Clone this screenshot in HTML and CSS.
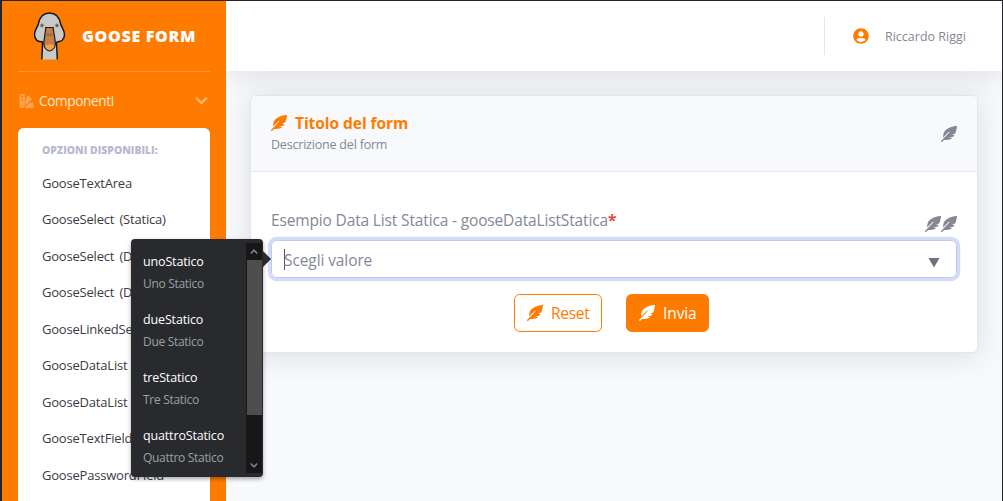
FILE: index.html
```html
<!DOCTYPE html>
<html lang="it">
<head>
<meta charset="utf-8">
<title>Goose Form</title>
<link rel="stylesheet" href="styles.css">
</head>
<body>
<svg class="defs" aria-hidden="true">
  <symbol id="feather" viewBox="0 0 512 512"><path d="M512 0C460.22 3.56 96.44 38.2 71.01 287.61c-3.09 26.66-4.84 53.44-5.99 80.24l178.87-178.69c6.25-6.25 16.4-6.25 22.65 0s6.25 16.38 0 22.63L7.04 471.03c-9.38 9.37-9.38 24.57 0 33.94 9.38 9.37 24.59 9.37 33.98 0l57.13-57.07c42.09-.14 84.15-2.53 125.96-7.36 53.48-5.44 97.02-26.47 132.58-56.54H255.74l146.79-48.88c11.25-14.89 21.37-30.71 30.45-47.12h-81.14l106.54-53.21C500.29 132.86 510.19 26.26 512 0z"/></symbol>
</svg>
<div class="app">
  <aside class="sidebar">
    <div class="brand">
      <svg class="goose" viewBox="0 0 34 48">
        <path d="M9 25 8.3 47.5H25L24.5 25Z" fill="#c9c9c9"/>
        <path d="M9.6 29 8.8 47.5M23.5 29 24.300 47.5" fill="none" stroke="#151515" stroke-width="1.5"/>
        <path d="M16.5 1C10 1 6.5 6 5.300 12 4.200 16 1.500 18 1.500 22.500 1.500 27 4.500 30 8.500 30H24.500C28.500 30 31.500 27 31.500 22.500 31.500 18 28.800 16 27.700 12 26.500 6 23 1 16.500 1Z" fill="#c9c9c9"/>
        <path d="M10 30C4.500 30 1.500 27 1.500 22.500 1.500 18 4.200 16 5.300 12 6.500 6 10 1 16.500 1 23 1 26.500 6 27.700 12 28.800 16 31.500 18 31.500 22.500 31.500 27 28.500 30 23.500 30" fill="none" stroke="#151515" stroke-width="1.500"/>
        <path d="M12.800 15.500H20.200C20.700 22 22.400 27 22.400 32 22.400 35.500 18.500 39 16.500 39 14.500 39 10.800 35.500 10.800 32 10.800 27 12.300 22 12.800 15.500Z" fill="#c27e4c" stroke="#241a13" stroke-width="1.200"/>
        <path d="M11.800 34C15 31.500 18.500 31.500 21.700 34 20 37 18 38.300 16.500 38.300 15 38.300 13 37 11.800 34Z" fill="#f2a343"/>
        <path d="M15 21.500v2.500M18 21.500v2.500" stroke="#704426" stroke-width="1"/>
        <circle cx="9" cy="13.500" r="1.700" fill="#555442" stroke="#a7a382"/><circle cx="24" cy="13.500" r="1.700" fill="#555442" stroke="#a7a382"/>
      </svg>
      <span class="brand-name">GOOSE FORM</span>
    </div>
    <hr class="divider">
    <div class="nav-toggle">
      <svg class="swatch" viewBox="0 0 512 512"><path d="M434.66,167.71h0L344.5,77.36a31.83,31.83,0,0,0-45-.07h0l-.07.07L224,152.88V424L434.66,212.9A32,32,0,0,0,434.66,167.71ZM480,320H373.09L186.68,506.51c-2.06,2.07-4.5,3.58-6.68,5.49H480a32,32,0,0,0,32-32V352A32,32,0,0,0,480,320ZM192,32A32,32,0,0,0,160,0H32A32,32,0,0,0,0,32V416a96,96,0,0,0,192,0ZM96,440a24,24,0,1,1,24-24A24,24,0,0,1,96,440Zm32-184H64V192h64Zm0-128H64V64h64Z"/></svg>
      <span class="nav-label">Componenti</span>
      <svg class="chevron" viewBox="0 0 12 8"><path d="M1.200 1.300 6 6.100 10.800 1.300"/></svg>
    </div>
    <nav class="submenu">
      <h6 class="submenu-title">OPZIONI DISPONIBILI:</h6>
      <a class="item">GooseTextArea</a>
      <a class="item">GooseSelect (Statica)</a>
      <a class="item">GooseSelect (D</a>
      <a class="item">GooseSelect (D</a>
      <a class="item">GooseLinkedSelect</a>
      <a class="item">GooseDataList</a>
      <a class="item">GooseDataList</a>
      <a class="item">GooseTextField</a>
      <a class="item">GoosePasswordField</a>
    </nav>
  </aside>
  <div class="content">
    <header class="topbar">
      <div class="topbar-divider"></div>
      <svg class="user-icon" viewBox="0 0 496 512"><path d="M248 8C111 8 0 119 0 256s111 248 248 248 248-111 248-248S385 8 248 8zm0 96c48.600 0 88 39.400 88 88s-39.400 88-88 88-88-39.400-88-88 39.400-88 88-88zm0 344c-58.700 0-111.300-26.600-146.500-68.200 18.800-35.400 55.600-59.800 98.500-59.800 2.400 0 4.800.4 7.100 1.100 13 4.200 26.600 6.900 40.900 6.900 14.300 0 28-2.700 40.900-6.900 2.300-.7 4.700-1.100 7.100-1.100 42.900 0 79.700 24.400 98.500 59.800C359.300 421.400 306.700 448 248 448z"/></svg>
      <span class="user-name">Riccardo Riggi</span>
    </header>
    <main class="card">
      <div class="card-header">
        <div class="heading">
          <div class="title"><svg class="feather"><use href="#feather"/></svg><span class="title-text">Titolo del form</span></div>
          <div class="subtitle">Descrizione del form</div>
        </div>
        <svg class="feather"><use href="#feather"/></svg>
      </div>
      <div class="card-body">
        <div class="label-row">
          <label class="label">Esempio Data List Statica - gooseDataListStatica<span class="required">*</span></label>
          <div class="label-icons"><svg class="feather"><use href="#feather"/></svg><svg class="feather"><use href="#feather"/></svg></div>
        </div>
        <div class="input">
          <span class="caret"></span><span class="placeholder">Scegli valore</span>
          <svg class="arrow-down" viewBox="0 0 12 10"><path d="M.500 0H11.500L6 9.500Z"/></svg>
        </div>
        <div class="buttons">
          <div class="btn btn-outline"><svg class="feather"><use href="#feather"/></svg><span class="reset-text">Reset</span></div>
          <div class="btn btn-solid"><svg class="feather"><use href="#feather"/></svg><span class="send-text">Invia</span></div>
        </div>
      </div>
    </main>
  </div>
</div>
<div class="popup">
  <div class="options">
    <div class="option"><div class="value">unoStatico</div><div class="desc">Uno Statico</div></div>
    <div class="option"><div class="value">dueStatico</div><div class="desc">Due Statico</div></div>
    <div class="option"><div class="value">treStatico</div><div class="desc">Tre Statico</div></div>
    <div class="option"><div class="value">quattroStatico</div><div class="desc">Quattro Statico</div></div>
  </div>
  <div class="scrollbar">
    <svg class="scroll-arrow" viewBox="0 0 8 7"><path d="M.8 5.500 4 2.200 7.200 5.500"/></svg>
    <div class="thumb"></div>
    <svg class="scroll-arrow" viewBox="0 0 8 7"><path d="M.8 1.500 4 4.800 7.200 1.500"/></svg>
  </div>
</div>
</body>
</html>
```
FILE: styles.css
```css
* { box-sizing: border-box; }
body { margin: 0; font-family: "Open Sans", "Noto Sans", sans-serif; color: #858796; white-space: nowrap; overflow: hidden; }
svg { display: block; flex: none; fill: currentColor; }
.defs { position: absolute; width: 0; height: 0; }
.app { display: flex; width: 1003px; height: 501px; overflow: hidden; border: solid #24252b; border-width: 1px 1px 0 2px; background: #f8f9fc; }

.sidebar { width: 224px; flex: none; padding: 0 16px; background: #ff7b00; }
.brand { display: flex; align-items: center; height: 70px; padding-left: 15px; }
.goose { width: 34px; height: 48px; }
.brand-name { margin-left: 15px; color: #fff; font-size: 16px; font-weight: 800; line-height: 24px; letter-spacing: .7px; }
.divider { height: 1px; margin: 0; border: 0; background: #ff9534; }
.nav-toggle { display: flex; align-items: center; height: 56px; padding: 1px 2px 0 1px; color: #ffe5cc; }
.swatch { width: 15px; height: 14px; color: #ffa452; }
.nav-label { margin-left: 5px; font-size: 13.600px; letter-spacing: -.35px; }
.chevron { width: 13px; height: 8px; margin-left: auto; }
.chevron path { fill: none; stroke: #ffb573; stroke-width: 2.200; stroke-linecap: round; stroke-linejoin: round; }
.submenu { height: 400px; padding: 8px 0; border-radius: 5.600px; background: #fff; }
.submenu-title { margin: 0; padding: 8px 24px; color: #b7b9cc; font-size: 10.400px; line-height: 13px; font-weight: 800; letter-spacing: 0; }
.item { display: block; height: 36.450px; padding-left: 24px; color: #3a3b45; font-size: 13px; line-height: 37.500px; letter-spacing: -.2px; word-spacing: 2px; }

.content { flex: 1; }
.topbar { display: flex; align-items: center; justify-content: flex-end; height: 70px; padding-right: 36px; background: #fff; box-shadow: 0 2.400px 28px 0 rgba(58,59,69,.15); clip-path: inset(0 0 -60px 0); }
.topbar-divider { width: 1px; height: 38px; background: #e3e6f0; }
.user-icon { width: 16px; height: 16px; margin: 0 16px 0 28px; color: #ff7b00; }
.user-name { width: 81px; font-size: 12.500px; }
.card { width: 728px; height: 258px; margin: 24px 0 0 24px; border: 1px solid #e3e6f0; border-radius: 5.600px; background: #fff; box-shadow: 0 2.400px 28px 0 rgba(58,59,69,.15); }
.card-header { display: flex; align-items: center; justify-content: space-between; height: 76px; padding: 0 20px; border-bottom: 1px solid #e3e6f0; border-radius: 5px 5px 0 0; background: #f8f9fc; }
.feather { width: 16px; height: 16px; }
.heading { margin-bottom: 3px; }
.title { display: flex; align-items: center; height: 24px; color: #ff7b00; }
.title-text { margin-left: 8px; font-size: 15.500px; font-weight: 700; letter-spacing: -.05px; }
.subtitle { font-size: 12.500px; line-height: 19px; letter-spacing: -.2px; }
.card-body { padding: 35px 20px 0; }
.label-row { display: flex; justify-content: space-between; height: 33px; }
.label { font-size: 15.500px; line-height: 26px; letter-spacing: -.15px; }
.required { color: #e74a3b; font-weight: 700; }
.label-icons { display: flex; padding-top: 9px; }
.input { display: flex; align-items: center; height: 38px; padding: 0 17px 0 12px; border: 1px solid #bac8f3; border-radius: 5.600px; box-shadow: 0 0 0 3.200px #d3dcf7; }
.caret { width: 1px; height: 21px; margin-right: -1px; background: #555661; }
.placeholder { margin-top: 1px; font-size: 15.500px; line-height: 24px; letter-spacing: -.1px; }
.arrow-down { width: 12px; height: 10px; margin: 7px -1px 0 auto; color: #6e707e; }
.buttons { display: flex; gap: 24px; margin-top: 16px; padding-left: 243px; }
.btn { display: flex; align-items: center; height: 38px; padding-left: 12px; border: 1px solid #ff7b00; border-radius: 5.600px; font-size: 15.500px; }
.btn span { margin-left: 8px; }
.btn-outline { width: 88px; color: #ff7b00; }
.btn-outline span { letter-spacing: -.3px; }
.btn-solid { width: 83px; color: #fff; background: #ff7b00; }
.btn-solid span { letter-spacing: -.1px; }

/* suggestion list floating over the page */
.popup { position: absolute; left: 131px; top: 239px; display: flex; width: 132px; height: 238px; padding: 4px 1px 4px 12px; border-radius: 4px; background: #292a2d; box-shadow: 0 2px 4px rgba(0,0,0,.35); }
.popup::after { content: ""; position: absolute; left: 132px; top: 12px; border: 8px solid transparent; border-right: 0; border-left-color: #292a2d; }
.options { flex: 1; padding-top: 8px; }
.option { height: 58px; }
.value { color: #fff; font-size: 12.500px; line-height: 21px; letter-spacing: -.15px; }
.desc { color: #9aa0a6; font-size: 12px; line-height: 23px; letter-spacing: -.3px; }
.scrollbar { display: flex; flex-direction: column; align-items: center; width: 16px; padding: 5px 0 4px; background: #171717; }
.scroll-arrow { width: 8px; height: 7px; }
.scroll-arrow path { fill: none; stroke: #858585; stroke-width: 1.500; }
.thumb { width: 15px; height: 155px; margin: 5px 0 auto; background: #4e4e4e; }
```
